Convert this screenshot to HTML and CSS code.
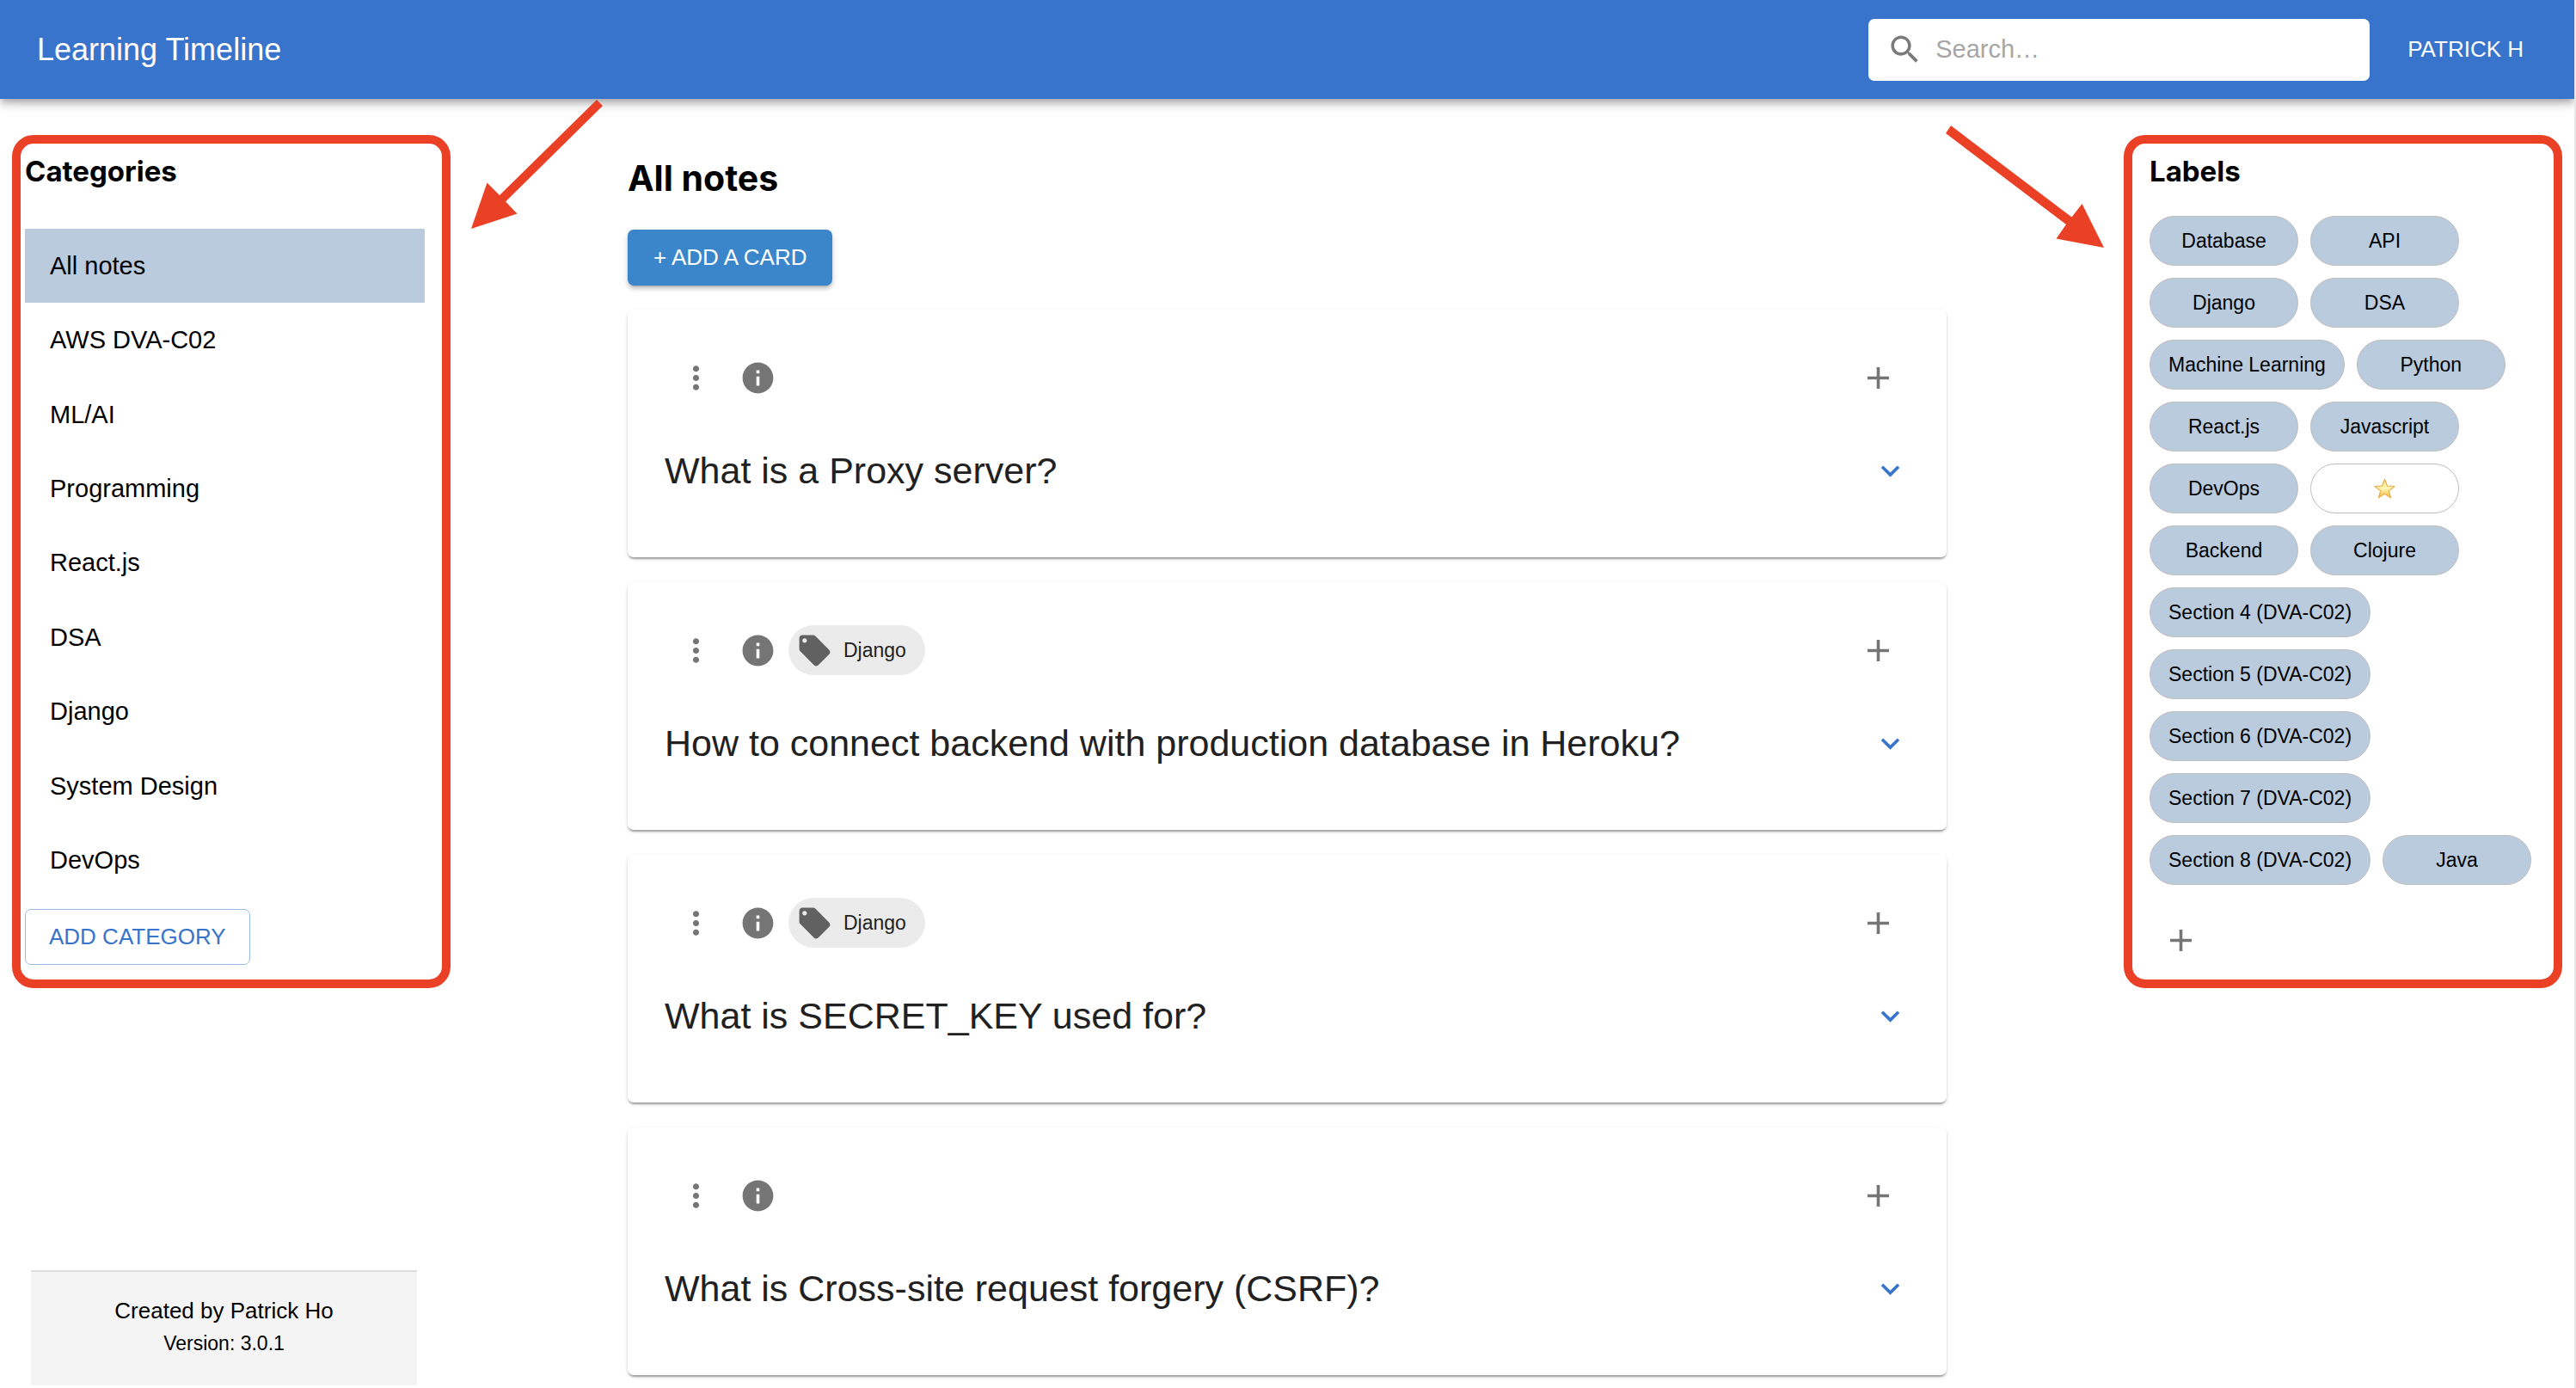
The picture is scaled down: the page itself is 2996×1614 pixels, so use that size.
FILE: index.html
```html
<!DOCTYPE html>
<html lang="en">
<head>
<meta charset="utf-8">
<title>Learning Timeline</title>
<link rel="stylesheet" href="styles.css">
</head>
<body>
<svg class="sprite" aria-hidden="true">
  <symbol id="i-search" viewBox="0 0 24 24"><path d="M15.5 14h-.79l-.28-.27C15.41 12.59 16 11.11 16 9.5 16 5.91 13.09 3 9.5 3S3 5.91 3 9.5 5.91 16 9.5 16c1.61 0 3.09-.59 4.23-1.57l.27.28v.79l5 4.99L20.49 19l-4.99-5zm-6 0C7.01 14 5 11.99 5 9.5S7.01 5 9.5 5 14 7.01 14 9.5 11.99 14 9.5 14z"/></symbol>
  <symbol id="i-more" viewBox="0 0 24 24"><path d="M12 8c1.1 0 2-.9 2-2s-.9-2-2-2-2 .9-2 2 .9 2 2 2zm0 2c-1.100 0-2 .9-2 2s.9 2 2 2 2-.9 2-2-.9-2-2-2zm0 6c-1.100 0-2 .9-2 2s.9 2 2 2 2-.9 2-2-.9-2-2-2z"/></symbol>
  <symbol id="i-info" viewBox="0 0 24 24"><path d="M12 2C6.480 2 2 6.480 2 12s4.480 10 10 10 10-4.480 10-10S17.520 2 12 2zm1 15h-2v-6h2v6zm0-8h-2V7h2v2z"/></symbol>
  <symbol id="i-add" viewBox="0 0 24 24"><path d="M19 13h-6v6h-2v-6H5v-2h6V5h2v6h6v2z"/></symbol>
  <symbol id="i-expand" viewBox="0 0 24 24"><path d="M16.590 8.590 12 13.170 7.410 8.590 6 10l6 6 6-6z"/></symbol>
  <symbol id="i-tag" viewBox="0 0 24 24"><path d="m21.410 11.580-9-9C12.050 2.220 11.550 2 11 2H4c-1.100 0-2 .9-2 2v7c0 .55.22 1.050.59 1.420l9 9c.36.36.86.58 1.410.58.55 0 1.050-.22 1.410-.59l7-7c.37-.36.59-.86.59-1.410 0-.55-.23-1.060-.59-1.420zM5.500 7C4.670 7 4 6.330 4 5.500S4.670 4 5.500 4 7 4.670 7 5.500 6.330 7 5.500 7z"/></symbol>
</svg>

<header class="appbar">
  <a class="brand" href="#">Learning Timeline</a>
  <label class="search">
    <svg class="icon"><use href="#i-search"/></svg>
    <input type="search" placeholder="Search…" aria-label="Search">
  </label>
  <button class="account" type="button">PATRICK H</button>
</header>

<div class="layout">
  <div class="left">
    <aside class="panel">
      <h3 class="panel-title">Categories</h3>
      <nav class="categories">
        <a class="category selected" href="#">All notes</a>
        <a class="category" href="#">AWS DVA-C02</a>
        <a class="category" href="#">ML/AI</a>
        <a class="category" href="#">Programming</a>
        <a class="category" href="#">React.js</a>
        <a class="category" href="#">DSA</a>
        <a class="category" href="#">Django</a>
        <a class="category" href="#">System Design</a>
        <a class="category" href="#">DevOps</a>
      </nav>
      <button class="button outlined" type="button">ADD CATEGORY</button>
    </aside>
    <footer class="credits">
      <p class="author">Created by Patrick Ho</p>
      <p class="version">Version: 3.0.1</p>
    </footer>
  </div>

  <main class="notes">
    <h2 class="notes-title">All notes</h2>
    <button class="button contained" type="button">+ ADD A CARD</button>
    <div class="cards">
      <article class="card">
        <div class="card-bar">
          <button class="icon-button" type="button" aria-label="More"><svg class="icon"><use href="#i-more"/></svg></button>
          <button class="icon-button" type="button" aria-label="Info"><svg class="icon"><use href="#i-info"/></svg></button>
          <button class="icon-button add" type="button" aria-label="Add"><svg class="icon"><use href="#i-add"/></svg></button>
        </div>
        <div class="card-body">
          <h5 class="question">What is a Proxy server?</h5>
          <button class="icon-button expand" type="button" aria-label="Expand"><svg class="icon"><use href="#i-expand"/></svg></button>
        </div>
      </article>
      <article class="card">
        <div class="card-bar">
          <button class="icon-button" type="button" aria-label="More"><svg class="icon"><use href="#i-more"/></svg></button>
          <button class="icon-button" type="button" aria-label="Info"><svg class="icon"><use href="#i-info"/></svg></button>
          <span class="tag"><svg class="icon"><use href="#i-tag"/></svg>Django</span>
          <button class="icon-button add" type="button" aria-label="Add"><svg class="icon"><use href="#i-add"/></svg></button>
        </div>
        <div class="card-body">
          <h5 class="question">How to connect backend with production database in Heroku?</h5>
          <button class="icon-button expand" type="button" aria-label="Expand"><svg class="icon"><use href="#i-expand"/></svg></button>
        </div>
      </article>
      <article class="card">
        <div class="card-bar">
          <button class="icon-button" type="button" aria-label="More"><svg class="icon"><use href="#i-more"/></svg></button>
          <button class="icon-button" type="button" aria-label="Info"><svg class="icon"><use href="#i-info"/></svg></button>
          <span class="tag"><svg class="icon"><use href="#i-tag"/></svg>Django</span>
          <button class="icon-button add" type="button" aria-label="Add"><svg class="icon"><use href="#i-add"/></svg></button>
        </div>
        <div class="card-body">
          <h5 class="question">What is SECRET_KEY used for?</h5>
          <button class="icon-button expand" type="button" aria-label="Expand"><svg class="icon"><use href="#i-expand"/></svg></button>
        </div>
      </article>
      <article class="card">
        <div class="card-bar">
          <button class="icon-button" type="button" aria-label="More"><svg class="icon"><use href="#i-more"/></svg></button>
          <button class="icon-button" type="button" aria-label="Info"><svg class="icon"><use href="#i-info"/></svg></button>
          <button class="icon-button add" type="button" aria-label="Add"><svg class="icon"><use href="#i-add"/></svg></button>
        </div>
        <div class="card-body">
          <h5 class="question">What is Cross-site request forgery (CSRF)?</h5>
          <button class="icon-button expand" type="button" aria-label="Expand"><svg class="icon"><use href="#i-expand"/></svg></button>
        </div>
      </article>
    </div>
  </main>

  <aside class="panel panel-labels">
    <h3 class="panel-title">Labels</h3>
    <div class="labels">
      <button class="label" type="button">Database</button>
      <button class="label" type="button">API</button>
      <button class="label" type="button">Django</button>
      <button class="label" type="button">DSA</button>
      <button class="label" type="button">Machine Learning</button>
      <button class="label" type="button">Python</button>
      <button class="label" type="button">React.js</button>
      <button class="label" type="button">Javascript</button>
      <button class="label" type="button">DevOps</button>
      <button class="label plain" type="button" aria-label="Starred">
        <svg class="star" viewBox="0 0 24 24">
          <defs><linearGradient id="gold" x1="0" y1="0" x2="0" y2="1"><stop offset="0" stop-color="#fbe27a"/><stop offset=".5" stop-color="#fdf6b4"/><stop offset="1" stop-color="#f3b32c"/></linearGradient></defs>
          <path fill="url(#gold)" stroke="#e3a945" stroke-width="1" stroke-linejoin="round" d="M12 1.200l2.900 7.500 8.100.4-6.300 5 2.100 7.900-6.800-4.400L5.200 22l2.100-7.900L1 9.100l8.100-.4z"/>
        </svg>
      </button>
      <button class="label" type="button">Backend</button>
      <button class="label" type="button">Clojure</button>
      <button class="label" type="button">Section 4 (DVA-C02)</button>
      <button class="label" type="button">Section 5 (DVA-C02)</button>
      <button class="label" type="button">Section 6 (DVA-C02)</button>
      <button class="label" type="button">Section 7 (DVA-C02)</button>
      <button class="label" type="button">Section 8 (DVA-C02)</button>
      <button class="label" type="button">Java</button>
    </div>
    <button class="icon-button add-label" type="button" aria-label="Add label"><svg class="icon"><use href="#i-add"/></svg></button>
  </aside>
</div>

<svg class="arrow arrow-left" viewBox="0 0 154 152" aria-hidden="true"><path d="M146 1l7 7L40 119.500l13.500 14L0 151l18.500-53.500L33 112z"/></svg>
<svg class="arrow arrow-right" viewBox="0 0 184 142" aria-hidden="true"><path d="M6 0L146.500 106.500 158.500 91 184 142l-55.500-10.500L140 115 0 9z"/></svg>
</body>
</html>
```
FILE: styles.css
```css
* {
  box-sizing: border-box;
}

html {
  background: #fff;
}

body {
  position: relative;
  display: flex;
  flex-direction: column;
  min-height: 100vh;
  margin: 0;
  border-right: 2px solid #e8e8e8;
  color: #000;
  font-family: "Liberation Sans", Arial, sans-serif;
  font-size: 29px;
}

h2, h3, h5, p {
  margin: 0;
}

a {
  color: inherit;
  text-decoration: none;
}

button, input {
  margin: 0;
  padding: 0;
  border: 0;
  background: none;
  color: inherit;
  font: inherit;
}

.sprite {
  position: absolute;
  width: 0;
  height: 0;
}

.icon {
  display: block;
  flex: none;
  width: 43px;
  height: 43px;
  fill: currentColor;
}

/* Top bar */
.appbar {
  display: flex;
  align-items: center;
  height: 115px;
  padding: 0 59px 0 43px;
  background: #3874cb;
  color: #fff;
  box-shadow: 0 4px 7px -2px rgba(0, 0, 0, .2), 0 7px 9px rgba(0, 0, 0, .14), 0 2px 18px rgba(0, 0, 0, .12);
}

.brand {
  margin-right: auto;
  font-size: 36px;
}

.search {
  display: flex;
  align-items: center;
  gap: 14px;
  width: 583px;
  height: 72px;
  margin-right: 44px;
  padding: 0 21px;
  border-radius: 7px;
  background: #fff;
  color: #7a7a7a;
}

.search input {
  flex: 1;
  min-width: 0;
  outline: 0;
  color: #222;
}

.search input::placeholder {
  color: #a6a6a6;
  opacity: 1;
}

.account {
  font-size: 26px;
}

/* Three columns */
.layout {
  display: grid;
  flex: 1;
  grid-template-columns: 510fr 1534fr 510fr;
  column-gap: 206px;
  align-items: start;
  padding: 42px 14px 0;
}

.left {
  display: flex;
  flex-direction: column;
  align-self: stretch;
}

.panel {
  min-height: 992px;
  padding: 10px 20px 10px 5px;
  border: 10px solid #ea4025;
  border-radius: 25px;
}

.panel-labels {
  padding: 10px 3px 10px 20px;
}

.panel-title {
  font-family: Inter, "Liberation Sans", sans-serif;
  font-size: 33px;
  font-weight: 700;
  line-height: 44px;
}

.categories {
  display: grid;
  grid-auto-rows: 1fr;
  min-height: 778px;
  margin-top: 45px;
}

.category {
  display: flex;
  align-items: center;
  padding: 0 29px;
}

.selected {
  background: #b9cbdc;
}

.button {
  display: block;
  height: 65px;
  padding: 0 30px;
  border-radius: 7px;
  font-size: 26px;
}

.outlined {
  margin-top: 13px;
  padding: 0 27px;
  border: 1px solid #9bb9e5;
  color: #3874cb;
}

.contained {
  background: #3b86cb;
  color: #fff;
  box-shadow: 0 5px 2px -4px rgba(0, 0, 0, .2), 0 4px 4px rgba(0, 0, 0, .14), 0 2px 9px rgba(0, 0, 0, .12);
}

.credits {
  margin: auto 39px 3px 22px;
  padding: 26px 0 30px;
  border-top: 2px solid #dcdcdc;
  background: #f4f4f4;
  text-align: center;
}

.author {
  font-size: 26px;
  line-height: 38px;
}

.version {
  font-size: 23px;
  line-height: 38px;
}

/* Notes */
.notes-title {
  margin: 24px 0 34px;
  font-family: Inter, "Liberation Sans", sans-serif;
  font-size: 41px;
  font-weight: 700;
  line-height: 52px;
}

.cards {
  display: grid;
  gap: 29px;
  margin-top: 28px;
}

.card {
  height: 288px;
  padding: 43px 44px 0 43px;
  border-radius: 7px;
  background: #fff;
  box-shadow: 0 4px 2px -2px rgba(0, 0, 0, .2), 0 2px 2px rgba(0, 0, 0, .14), 0 2px 5px rgba(0, 0, 0, .12);
}

.card-bar {
  display: flex;
  align-items: center;
  height: 72px;
}

.icon-button {
  display: flex;
  align-items: center;
  justify-content: center;
  width: 72px;
  height: 72px;
  color: #757575;
}

.add {
  margin-left: auto;
}

.tag {
  display: flex;
  align-items: center;
  gap: 12px;
  height: 58px;
  padding: 0 22px 0 9px;
  border-radius: 29px;
  background: #ebebeb;
  color: #222;
  font-size: 23px;
}

.tag .icon {
  color: #616161;
}

.card-body {
  display: flex;
  align-items: center;
  justify-content: space-between;
  height: 72px;
  margin-top: 36px;
}

.question {
  color: #212121;
  font-size: 43px;
  font-weight: 400;
}

.expand {
  width: 43px;
  color: #3874cb;
}

/* Labels */
.labels {
  display: flex;
  flex-wrap: wrap;
  gap: 14px;
  margin-top: 30px;
}

.label {
  display: flex;
  align-items: center;
  justify-content: center;
  min-width: 173px;
  height: 58px;
  padding: 0 21px;
  border: 1px solid #bdbdbd;
  border-radius: 29px;
  background: #b9cbdc;
  font-size: 23px;
}

.plain {
  background: #fff;
}

.star {
  width: 25px;
  height: 25px;
}

.add-label {
  margin-top: 28px;
}

/* Arrows drawn over the page */
.arrow {
  position: absolute;
  fill: #ea4025;
}

.arrow-left {
  top: 115px;
  left: 548px;
  width: 154px;
  height: 152px;
}

.arrow-right {
  top: 146px;
  right: 547px;
  width: 184px;
  height: 142px;
}
```
